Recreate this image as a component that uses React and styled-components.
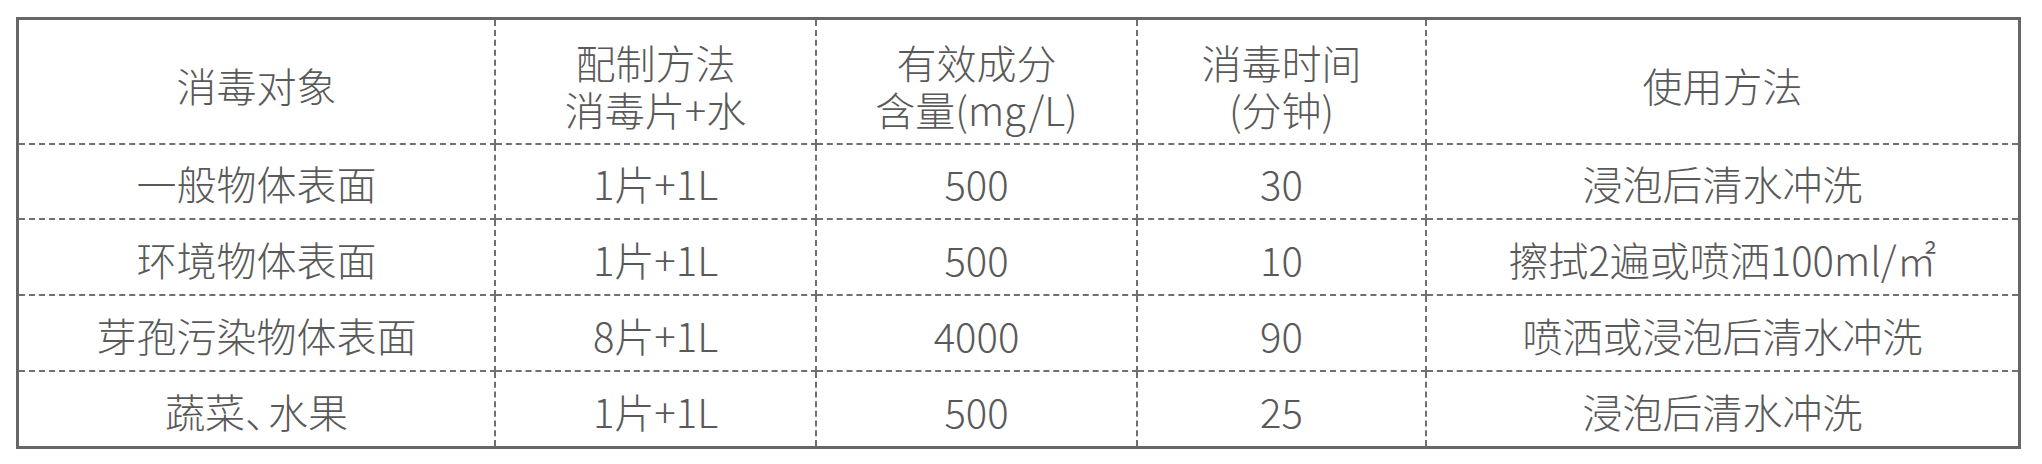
import React from "react";
import styled, { createGlobalStyle } from "styled-components";

const GlobalStyle = createGlobalStyle`
  html, body {
    margin: 0;
    padding: 0;
    background: #ffffff;
  }
  body {
    font-family: "Noto Sans CJK SC", "Noto Sans", sans-serif;
  }
`;

const Page = styled.div`
  padding: 17px 0 0 16px;
`;

const Table = styled.div`
  display: grid;
  grid-template-columns: 477px 321px 321px 289px 591px;
  grid-template-rows: 125px 75px 76px 76px 74px;
  width: 1999px;
  border: 3px solid #666666;
  background: #ffffff;
`;

const Cell = styled.div`
  display: flex;
  flex-direction: column;
  align-items: center;
  justify-content: center;
  box-sizing: border-box;
  padding-top: ${(p) => (p.$head ? "8px" : "4px")};
  font-family: "Noto Sans CJK SC", "Noto Sans", sans-serif;
  font-size: 40px;
  font-weight: 300;
  line-height: 47px;
  color: #595959;
  text-align: center;
  white-space: nowrap;
  border-right: ${(p) => (p.$last ? "none" : "2px dashed #707070")};
  border-bottom: ${(p) => (p.$bottom ? "none" : "2px dashed #707070")};
`;

const Line = styled.span`
  display: block;
`;

const Comma = styled.span`
  margin-right: -0.42em;
`;

const header = [
  ["消毒对象"],
  ["配制方法", "消毒片+水"],
  ["有效成分", "含量(mg/L)"],
  ["消毒时间", "(分钟)"],
  ["使用方法"],
];

const rows = [
  ["一般物体表面", "1片+1L", "500", "30", "浸泡后清水冲洗"],
  ["环境物体表面", "1片+1L", "500", "10", "擦拭2遍或喷洒100ml/㎡"],
  ["芽孢污染物体表面", "8片+1L", "4000", "90", "喷洒或浸泡后清水冲洗"],
  [
    <>
      蔬菜<Comma>、</Comma>水果
    </>,
    "1片+1L",
    "500",
    "25",
    "浸泡后清水冲洗",
  ],
];

export default function App() {
  return (
    <>
      <GlobalStyle />
      <Page>
        <Table>
          {header.map((lines, i) => (
            <Cell key={`h${i}`} $head $last={i === header.length - 1}>
              {lines.map((t) => (
                <Line key={t}>{t}</Line>
              ))}
            </Cell>
          ))}
          {rows.map((row, r) =>
            row.map((t, c) => (
              <Cell
                key={`${r}-${c}`}
                $last={c === row.length - 1}
                $bottom={r === rows.length - 1}
              >
                <Line>{t}</Line>
              </Cell>
            ))
          )}
        </Table>
      </Page>
    </>
  );
}
